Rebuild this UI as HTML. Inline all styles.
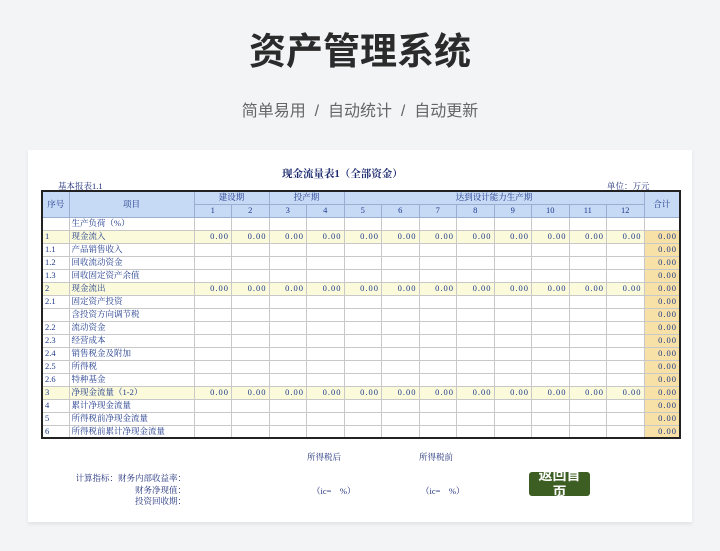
<!DOCTYPE html>
<html><head><meta charset="utf-8"><style>
*{margin:0;padding:0;box-sizing:border-box}
body{width:720px;height:551px;background:#f3f4f6;position:relative;overflow:hidden;font-family:"Liberation Serif","Noto Serif CJK SC",serif}
.h1{position:absolute;top:29px;left:0;width:720px;text-align:center;font:bold 37px/46px "Liberation Sans","Noto Sans CJK SC",sans-serif;color:#2b2b2b}
.sub{position:absolute;top:101px;left:0;width:720px;text-align:center;font:16px/22px "Liberation Sans","Noto Sans CJK SC",sans-serif;color:#666}
.card{position:absolute;left:28px;top:150px;width:664px;height:372px;background:#fff;box-shadow:0 2px 4px rgba(0,0,0,.08)}
.t{position:absolute;color:#1f2f7a;font-size:8.5px;white-space:nowrap}
table{position:absolute;left:13px;top:40px;width:638px;border-collapse:collapse;table-layout:fixed;border:2px solid #222}
td{height:13px;border:1px solid #c8c8c8;font-size:8.5px;line-height:11px;color:#1f3a8a;padding:0 2px;white-space:nowrap;overflow:hidden}
tr.hd td{background:#c6d9f5;text-align:center;border-color:#9aaed0}
td.n{text-align:right;letter-spacing:1px}
tr.y td{background:#fbfbdc}
td.s{background:#f8e1a6!important;text-align:right;letter-spacing:1px}
.btn{position:absolute;left:501px;top:322px;width:61px;height:24px;background:#3c5e22;border-radius:3px;color:#fff;font:bold 14px/17px "Liberation Sans","Noto Sans CJK SC",sans-serif;text-align:center;overflow:hidden;padding:0 8px}
.btn span{display:block;margin-top:-5px;word-break:break-all;white-space:normal}
</style></head><body>
<div class="h1">资产管理系统</div>
<div class="sub">简单易用 &nbsp;/&nbsp; 自动统计 &nbsp;/&nbsp; 自动更新</div>
<div class="card">
<div class="t" style="left:254px;top:16px;font-size:10.5px;font-weight:bold;color:#1a2a6e">现金流量表1（全部资金）</div>
<div class="t" style="left:30px;top:30px">基本报表1.1</div>
<div class="t" style="left:579px;top:30px">单位：万元</div>
<table>
<colgroup><col style="width:27px"><col style="width:125px"><col span="12" style="width:37.5px"><col style="width:36px"></colgroup>
<tr class="hd"><td rowspan="2">序号</td><td rowspan="2">项目</td><td colspan="2">建设期</td><td colspan="2">投产期</td><td colspan="8">达到设计能力生产期</td><td rowspan="2">合计</td></tr>
<tr class="hd"><td>1</td><td>2</td><td>3</td><td>4</td><td>5</td><td>6</td><td>7</td><td>8</td><td>9</td><td>10</td><td>11</td><td>12</td></tr>
<tr><td></td><td>生产负荷（%）</td><td></td><td></td><td></td><td></td><td></td><td></td><td></td><td></td><td></td><td></td><td></td><td></td><td></td></tr>
<tr class="y"><td>1</td><td>现金流入</td><td class="n">0.00</td><td class="n">0.00</td><td class="n">0.00</td><td class="n">0.00</td><td class="n">0.00</td><td class="n">0.00</td><td class="n">0.00</td><td class="n">0.00</td><td class="n">0.00</td><td class="n">0.00</td><td class="n">0.00</td><td class="n">0.00</td><td class="s">0.00</td></tr>
<tr><td>1.1</td><td>产品销售收入</td><td></td><td></td><td></td><td></td><td></td><td></td><td></td><td></td><td></td><td></td><td></td><td></td><td class="s">0.00</td></tr>
<tr><td>1.2</td><td>回收流动资金</td><td></td><td></td><td></td><td></td><td></td><td></td><td></td><td></td><td></td><td></td><td></td><td></td><td class="s">0.00</td></tr>
<tr><td>1.3</td><td>回收固定资产余值</td><td></td><td></td><td></td><td></td><td></td><td></td><td></td><td></td><td></td><td></td><td></td><td></td><td class="s">0.00</td></tr>
<tr class="y"><td>2</td><td>现金流出</td><td class="n">0.00</td><td class="n">0.00</td><td class="n">0.00</td><td class="n">0.00</td><td class="n">0.00</td><td class="n">0.00</td><td class="n">0.00</td><td class="n">0.00</td><td class="n">0.00</td><td class="n">0.00</td><td class="n">0.00</td><td class="n">0.00</td><td class="s">0.00</td></tr>
<tr><td>2.1</td><td>固定资产投资</td><td></td><td></td><td></td><td></td><td></td><td></td><td></td><td></td><td></td><td></td><td></td><td></td><td class="s">0.00</td></tr>
<tr><td></td><td>含投资方向调节税</td><td></td><td></td><td></td><td></td><td></td><td></td><td></td><td></td><td></td><td></td><td></td><td></td><td class="s">0.00</td></tr>
<tr><td>2.2</td><td>流动资金</td><td></td><td></td><td></td><td></td><td></td><td></td><td></td><td></td><td></td><td></td><td></td><td></td><td class="s">0.00</td></tr>
<tr><td>2.3</td><td>经营成本</td><td></td><td></td><td></td><td></td><td></td><td></td><td></td><td></td><td></td><td></td><td></td><td></td><td class="s">0.00</td></tr>
<tr><td>2.4</td><td>销售税金及附加</td><td></td><td></td><td></td><td></td><td></td><td></td><td></td><td></td><td></td><td></td><td></td><td></td><td class="s">0.00</td></tr>
<tr><td>2.5</td><td>所得税</td><td></td><td></td><td></td><td></td><td></td><td></td><td></td><td></td><td></td><td></td><td></td><td></td><td class="s">0.00</td></tr>
<tr><td>2.6</td><td>特种基金</td><td></td><td></td><td></td><td></td><td></td><td></td><td></td><td></td><td></td><td></td><td></td><td></td><td class="s">0.00</td></tr>
<tr class="y"><td>3</td><td>净现金流量（1-2）</td><td class="n">0.00</td><td class="n">0.00</td><td class="n">0.00</td><td class="n">0.00</td><td class="n">0.00</td><td class="n">0.00</td><td class="n">0.00</td><td class="n">0.00</td><td class="n">0.00</td><td class="n">0.00</td><td class="n">0.00</td><td class="n">0.00</td><td class="s">0.00</td></tr>
<tr><td>4</td><td>累计净现金流量</td><td></td><td></td><td></td><td></td><td></td><td></td><td></td><td></td><td></td><td></td><td></td><td></td><td class="s">0.00</td></tr>
<tr><td>5</td><td>所得税前净现金流量</td><td></td><td></td><td></td><td></td><td></td><td></td><td></td><td></td><td></td><td></td><td></td><td></td><td class="s">0.00</td></tr>
<tr><td>6</td><td>所得税前累计净现金流量</td><td></td><td></td><td></td><td></td><td></td><td></td><td></td><td></td><td></td><td></td><td></td><td></td><td class="s">0.00</td></tr>
</table>
<div class="t" style="left:279px;top:301px">所得税后</div>
<div class="t" style="left:391px;top:301px">所得税前</div>
<div class="t" style="left:12px;top:323px;width:146px;text-align:right;line-height:11.5px">计算指标：财务内部收益率：<br>财务净现值：<br>投资回收期：</div>
<div class="t" style="left:284px;top:335px">（ic=　%）</div>
<div class="t" style="left:393px;top:335px">（ic=　%）</div>
<div class="btn"><span>返回首页</span></div>
</div>
</body></html>
